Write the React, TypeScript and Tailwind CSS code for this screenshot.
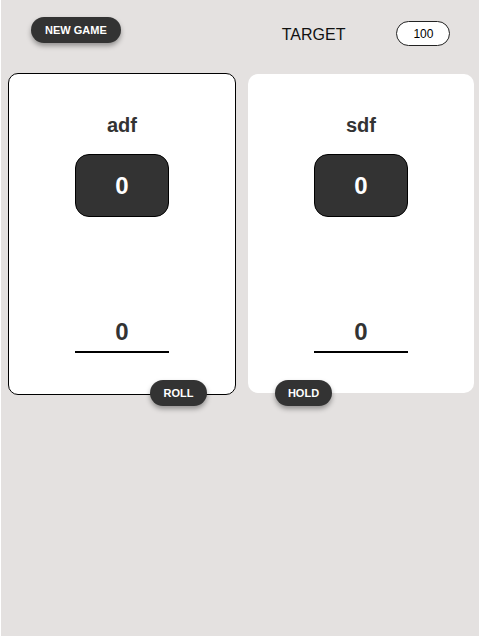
import { useState } from "react";

const font = { fontFamily: '"Liberation Sans", Arial, sans-serif' };

const PlayerCard = ({
  name,
  score,
  current,
  active,
}: {
  name: string;
  score: number;
  current: number;
  active: boolean;
}) => (
  <div
    className={`flex flex-col items-center bg-white rounded-[10px] ${
      active
        ? "w-[228px] h-[322px] border border-black"
        : "w-[226px] h-[319px] mt-[1px]"
    }`}
  >
    <div className="mt-[39px] text-[20px] leading-[24px] font-bold text-[#333]">
      {name}
    </div>
    <div className="mt-[17px] w-[94px] h-[63px] rounded-[14px] bg-[#333] border border-black flex items-center justify-center text-white text-[24px] font-bold">
      {score}
    </div>
    <div className="mt-[101px] w-[94px] border-b-2 border-black flex justify-center text-[24px] leading-[28px] font-bold text-[#333] pb-[5px]">
      {current}
    </div>
  </div>
);

export default function App() {
  const [target, setTarget] = useState("100");

  return (
    <div className="min-h-screen bg-white px-[1px]" style={font}>
      <div className="h-[636px] bg-[#e4e1e0]">
        {/* Top bar */}
        <header className="flex items-start pt-[17px] pl-[30px]">
          <button className="h-[26px] px-[14px] rounded-full bg-[#333] text-white text-[11px] font-bold shadow-[0_3px_5px_rgba(0,0,0,0.35)]">
            NEW GAME
          </button>
          <span className="ml-[161px] mt-[9px] text-[16px] leading-[18px] text-[#111]">
            TARGET
          </span>
          <input
            value={target}
            onChange={(e) => setTarget(e.target.value)}
            className="ml-[51px] mt-[4px] w-[54px] h-[25px] rounded-full border border-[#222] bg-white text-center text-[12px] text-black outline-none"
          />
        </header>

        {/* Players */}
        <main className="flex items-start gap-[12px] pl-[7px] mt-[27px]">
          <PlayerCard name="adf" score={0} current={0} active />
          <PlayerCard name="sdf" score={0} current={0} active={false} />
        </main>

        {/* Actions */}
        <div className="relative flex gap-[68px] pl-[149px] -mt-[15px]">
          <button className="h-[26px] w-[57px] rounded-full bg-[#333] text-white text-[11px] font-bold shadow-[0_3px_5px_rgba(0,0,0,0.35)]">
            ROLL
          </button>
          <button className="h-[26px] w-[57px] rounded-full bg-[#333] text-white text-[11px] font-bold shadow-[0_3px_5px_rgba(0,0,0,0.35)]">
            HOLD
          </button>
        </div>
      </div>
    </div>
  );
}
